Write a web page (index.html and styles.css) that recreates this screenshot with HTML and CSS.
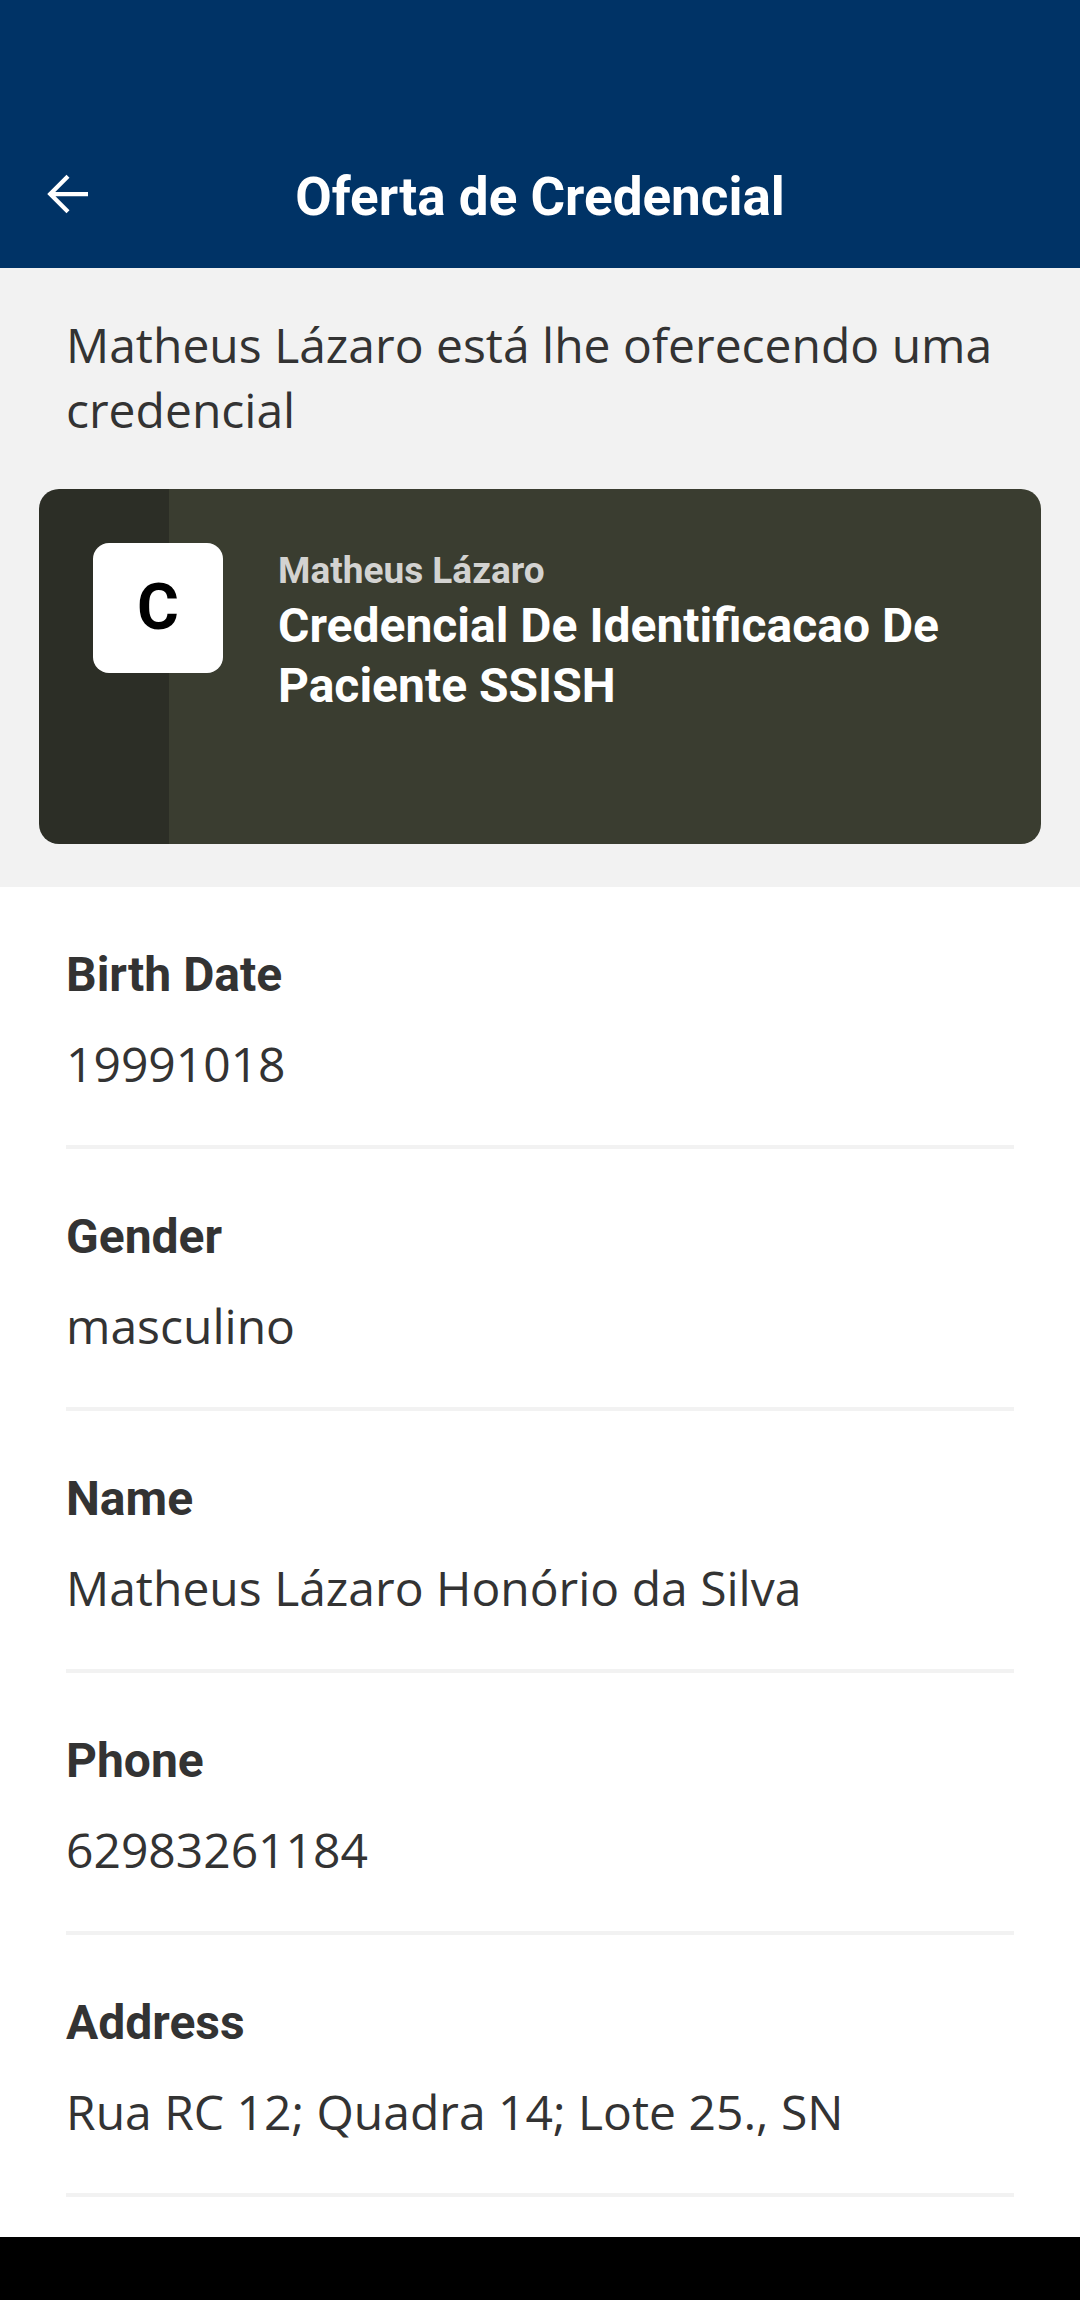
FILE: index.html
```html
<!DOCTYPE html>
<html lang="pt-BR">
<head>
<meta charset="utf-8">
<title>Oferta de Credencial</title>
<link rel="stylesheet" href="styles.css">
</head>
<body>
<div class="screen">
  <header class="appbar">
    <div class="toolbar">
      <div class="nav-slot">
        <svg class="back-icon" viewBox="0 0 24 24" width="60" height="60" aria-label="Voltar">
          <path d="M20 12H4.9M12 4.9L4.9 12L12 19.1" fill="none" stroke="#ffffff" stroke-width="1.7"/>
        </svg>
      </div>
      <h1 class="title">Oferta de Credencial</h1>
      <div class="nav-slot-end"></div>
    </div>
  </header>

  <section class="offer">
    <p class="intro">Matheus Lázaro está lhe oferecendo uma credencial</p>
    <div class="cred-card">
      <div class="cred-logo">C</div>
      <div class="cred-text">
        <div class="cred-issuer">Matheus Lázaro</div>
        <div class="cred-name">Credencial De Identificacao De Paciente SSISH</div>
      </div>
    </div>
  </section>

  <ul class="fields">
    <li class="field">
      <div class="field-label">Birth Date</div>
      <div class="field-value">19991018</div>
    </li>
    <li class="field">
      <div class="field-label">Gender</div>
      <div class="field-value">masculino</div>
    </li>
    <li class="field">
      <div class="field-label">Name</div>
      <div class="field-value">Matheus Lázaro Honório da Silva</div>
    </li>
    <li class="field">
      <div class="field-label">Phone</div>
      <div class="field-value">62983261184</div>
    </li>
    <li class="field">
      <div class="field-label">Address</div>
      <div class="field-value">Rua RC 12; Quadra 14; Lote 25., SN</div>
    </li>
  </ul>

  <div class="spacer"></div>
  <div class="navbar"></div>
</div>
</body>
</html>
```

FILE: styles.css
```css
html, body {
  margin: 0;
  padding: 0;
  background: #ffffff;
}

.screen {
  width: 1080px;
  height: 2300px;
  display: flex;
  flex-direction: column;
  overflow: hidden;
  background: #ffffff;
}

.appbar {
  flex: none;
  background: #003366;
  padding-top: 124px;
}

.toolbar {
  height: 144px;
  display: grid;
  grid-template-columns: 1fr auto 1fr;
  align-items: center;
}

.nav-slot {
  display: flex;
  align-items: center;
  padding-left: 38px;
}

.back-icon {
  display: block;
  margin-top: -4px;
}

.title {
  margin: 2px 0 0;
  font-family: Roboto, "Liberation Sans", sans-serif;
  font-weight: 700;
  font-size: 53px;
  line-height: 64px;
  color: #ffffff;
  white-space: nowrap;
}

.offer {
  flex: none;
  background: #f2f2f2;
  padding: 44px 39px 43px;
}

.intro {
  margin: 0 27px 47px;
  font-family: "Open Sans", "Noto Sans", sans-serif;
  font-weight: 400;
  font-size: 48px;
  line-height: 65px;
  color: #333333;
}

.cred-card {
  height: 355px;
  box-sizing: border-box;
  border-radius: 20px;
  background: linear-gradient(to right, #2c2e26 130px, #3a3d30 130px);
  display: flex;
  align-items: flex-start;
  padding: 54px 40px 0 54px;
}

.cred-logo {
  flex: none;
  width: 130px;
  height: 130px;
  border-radius: 16px;
  background: #ffffff;
  display: flex;
  align-items: center;
  justify-content: center;
  font-family: Roboto, "Liberation Sans", sans-serif;
  font-weight: 700;
  font-size: 64px;
  line-height: 1;
  color: #000000;
}

.cred-text {
  margin-left: 55px;
  padding-top: 6px;
}

.cred-issuer {
  font-family: Roboto, "Liberation Sans", sans-serif;
  font-weight: 700;
  font-size: 37px;
  line-height: 43px;
  color: #d3d3d1;
}

.cred-name {
  margin-top: 4px;
  font-family: Roboto, "Liberation Sans", sans-serif;
  font-weight: 700;
  font-size: 48px;
  line-height: 60px;
  color: #ffffff;
}

.fields {
  flex: none;
  list-style: none;
  margin: 0;
  padding: 0 66px;
}

.field {
  padding-top: 60px;
  padding-bottom: 49px;
  border-bottom: 4px solid #f2f2f2;
}

.field-label {
  font-family: Roboto, "Liberation Sans", sans-serif;
  font-weight: 700;
  font-size: 48px;
  line-height: 56px;
  color: #333333;
}

.field-value {
  margin-top: 28px;
  font-family: "Open Sans", "Noto Sans", sans-serif;
  font-weight: 400;
  font-size: 48px;
  line-height: 65px;
  color: #333333;
}

.spacer {
  flex: 1;
}

.navbar {
  flex: none;
  height: 63px;
  background: #000000;
}
```
